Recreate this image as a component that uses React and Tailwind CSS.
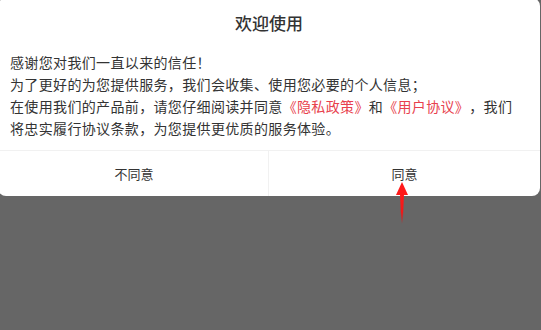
/**
 * Privacy consent dialog over a dimmed backdrop.
 */

function RedArrow() {
  return (
    <svg
      aria-hidden="true"
      className="absolute left-[394px] top-[181px]"
      width="16"
      height="44"
      viewBox="0 0 16 44"
    >
      <defs>
        <linearGradient id="shaft" x1="0" y1="0" x2="0" y2="1">
          <stop offset="0" stopColor="#ff1a1a" />
          <stop offset="0.6" stopColor="#f01818" />
          <stop offset="1" stopColor="#e01010" stopOpacity="0" />
        </linearGradient>
      </defs>
      <polygon points="8,1 14,14 2,14" fill="#ff1a1a" />
      <polygon points="6,13 10,13 8.7,43 7.3,43" fill="url(#shaft)" />
    </svg>
  )
}

export default function App() {
  return (
    <div className="relative w-[541px] h-[330px] overflow-hidden bg-[#666666] font-['Noto_Sans_CJK_SC','Noto_Sans',sans-serif]">
      <div className="-ml-[2px] -mt-[2px] w-[542px] rounded-[8px] bg-white text-[#333333]">
        <h1 className="pt-[13px] text-center text-[17px] leading-[24px] font-medium">
          欢迎使用
        </h1>
        <div className="mt-[16px] pl-[12px] pr-[16px] pb-[11px] text-[14px] leading-[22px] tracking-[0.35px] [text-spacing-trim:space-all]">
          <p>感谢您对我们一直以来的信任！</p>
          <p>为了更好的为您提供服务，我们会收集、使用您必要的个人信息；</p>
          <p>
            在使用我们的产品前，请您仔细阅读并同意
            <span className="text-[#e8414d]">《隐私政策》</span>和
            <span className="text-[#e8414d]">《用户协议》</span>，我们将忠实履行协议条款，为您提供更优质的服务体验。
          </p>
        </div>
        <div className="grid grid-cols-2 border-t border-[#f1f1f1] text-[13px]">
          <button className="h-[45px] border-r border-[#f1f1f1] pl-[2px] text-[#333333]">
            不同意
          </button>
          <button className="h-[45px] text-[#333333]">同意</button>
        </div>
      </div>
      <RedArrow />
    </div>
  )
}
